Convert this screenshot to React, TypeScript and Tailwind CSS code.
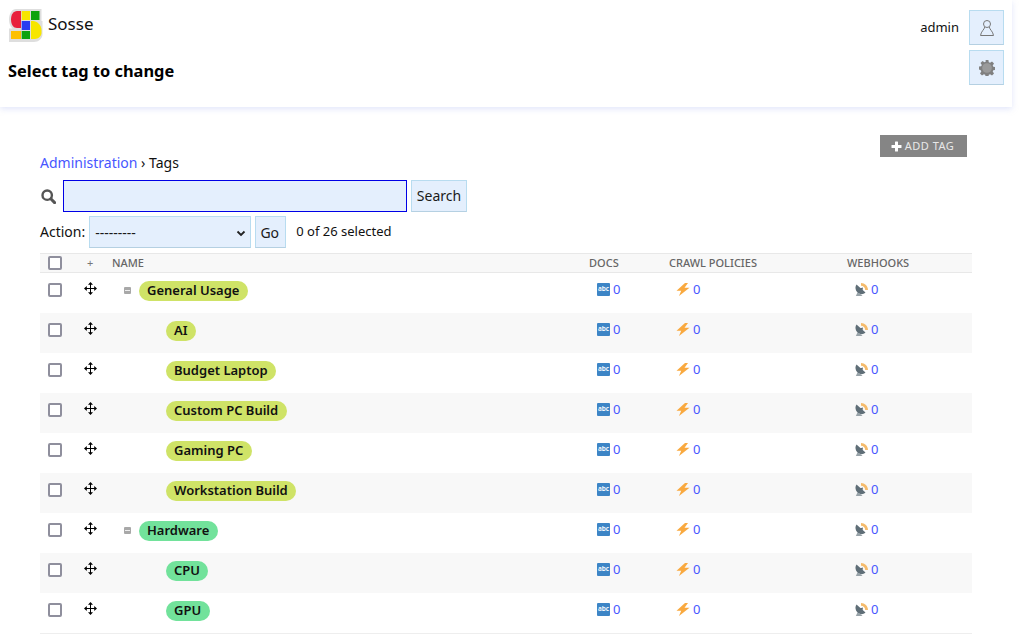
import React from "react";

const GREEN = "bg-[#cfe367]";
const MINT = "bg-[#72e29b]";

type Row = { name: string; color: string; child: boolean };
const rows: Row[] = [
  { name: "General Usage", color: GREEN, child: false },
  { name: "AI", color: GREEN, child: true },
  { name: "Budget Laptop", color: GREEN, child: true },
  { name: "Custom PC Build", color: GREEN, child: true },
  { name: "Gaming PC", color: GREEN, child: true },
  { name: "Workstation Build", color: GREEN, child: true },
  { name: "Hardware", color: MINT, child: false },
  { name: "CPU", color: MINT, child: true },
  { name: "GPU", color: MINT, child: true },
];

function Logo() {
  return (
    <svg width="35" height="35" viewBox="0 0 35 35" className="shrink-0">
      <path
        d="M8 1H33.500V13H34.500V26C34.500 30.500 30.500 34 26 34H1V20.500H4.500C2 18.500 1 15 1 11.500C1 6 4 1 8 1Z"
        fill="#dedede"
      />
      <path d="M13 3V20H9C5.500 20 3 16.500 3 11.500S5.500 3 9 3Z" fill="#e8203c" />
      <rect x="13.700" y="3" width="8.300" height="9" fill="#f7e600" />
      <rect x="23" y="3" width="8.500" height="9" fill="#0da30d" />
      <rect x="13.700" y="13" width="8.300" height="9" fill="#2a3cf0" />
      <path d="M23 13H25C29 13 33.500 17 33.500 22V25C33.500 28 30 31 27 31H23Z" fill="#f7e600" />
      <rect x="3" y="23" width="10" height="8" fill="#fdc000" />
      <rect x="13.700" y="23" width="8.300" height="8" fill="#0da30d" />
    </svg>
  );
}

function UserIcon() {
  return (
    <svg width="16" height="18" viewBox="0 0 16 18" fill="none" stroke="#777" strokeWidth="1">
      <circle cx="8" cy="5" r="3.500" />
      <path d="M5.800 8c-.5 2.500-3.800 4.500-4.300 8.500h13c-.5-4-3.800-6-4.300-8.500" />
    </svg>
  );
}

function GearIcon() {
  return (
    <svg width="16" height="16" viewBox="0 0 16 16">
      <path
        fill="#808080"
        d="M6.600 0h2.800l.4 2.200 1.300.6 1.900-1.300 2 2-1.300 1.900.6 1.300 2.200.4v2.800l-2.200.4-.6 1.300 1.300 1.900-2 2-1.900-1.300-1.300.6-.4 2.200H6.600l-.4-2.200-1.300-.6-1.900 1.300-2-2 1.300-1.900-.6-1.300L0 9.400V6.600l2.200-.4.600-1.300-1.300-1.900 2-2 1.900 1.300 1.300-.6z"
      />
      <circle cx="8" cy="8" r="4.800" fill="#9a9a9a" />
    </svg>
  );
}

function SearchIcon() {
  return (
    <svg width="15" height="15" viewBox="0 0 15 15" fill="none" stroke="#555" className="ml-px shrink-0">
      <circle cx="6.200" cy="6.200" r="4.700" strokeWidth="2.400" />
      <path d="M9.800 9.800l3.800 3.800" strokeWidth="3" strokeLinecap="round" />
    </svg>
  );
}

function MoveIcon() {
  return (
    <svg width="13" height="13" viewBox="0 0 13 13" fill="#000">
      <rect x="6" y="2" width="1" height="9" />
      <rect x="2" y="6" width="9" height="1" />
      <path d="M6.500 0L9 2.800H4zM6.500 13L4 10.200h5zM0 6.500L2.800 4v5zM13 6.500L10.200 9V4z" />
    </svg>
  );
}

function Checkbox() {
  return <span className="block h-[14px] w-[14px] rounded-[2px] border-2 border-[#8f8f9d] bg-white" />;
}

function Collapse() {
  return (
    <span className="flex h-[7px] w-[7px] items-center justify-center rounded-[1px] bg-[#a8a8a8]">
      <span className="block h-px w-[5px] bg-[#eee]" />
    </span>
  );
}

function DocsIcon() {
  return (
    <span className="flex h-[13px] w-[13px] items-center justify-center rounded-[1px] bg-[#3d85c6] text-[6.500px] leading-none font-semibold text-white">
      abc
    </span>
  );
}

function BoltIcon() {
  return (
    <svg width="14" height="13" viewBox="0 0 14 13" className="-ml-px">
      <path d="M9 0L.5 7.800h4.700L3 13 13.500 4.800H8.500L12 0z" fill="#f9a93f" />
    </svg>
  );
}

function DishIcon() {
  return (
    <svg width="13" height="13" viewBox="0 0 13 13">
      <path d="M6 0C9.800 0 13 3.200 13 7L10.200 7C10.200 4.700 8.300 2.800 6 2.800Z" fill="#f5bb6c" />
      <path d="M1.500 1.500L10.500 9.500C8 12 4.500 11.500 2.500 9.500S-.3 4 1.500 1.500Z" fill="#5f6e77" />
      <path d="M2.500 9.500L.8 13H7.500L5.500 11Z" fill="#98a3a9" />
      <path d="M4.500 5.500L8 4.500L7.500 7.500Z" fill="#5f6e77" />
    </svg>
  );
}

function Count({ icon }: { icon: React.ReactNode }) {
  return (
    <span className="flex items-center gap-[3px]">
      {icon}
      <a className="text-[13px] leading-none text-[#4756ff]">0</a>
    </span>
  );
}

function TagRow({ row, index }: { row: Row; index: number }) {
  return (
    <div className={`flex h-10 items-start ${index % 2 ? "bg-[#f8f8f8]" : "bg-white"}`}>
      <div className="w-[30px] pt-[10px] pl-2">
        <Checkbox />
      </div>
      <div className="w-[42px] pt-[9px] pl-[14px]">
        <MoveIcon />
      </div>
      <div className="flex w-[485px] pt-[8px]">
        {row.child ? (
          <span className="w-[54px] shrink-0" />
        ) : (
          <span className="flex w-[27px] shrink-0 pt-[6px] pl-[12px]">
            <Collapse />
          </span>
        )}
        <span className={`${row.color} h-5 rounded-[10px] pr-[8.400px] pl-2 text-[13px] leading-[18px] font-semibold text-[#111]`}>
          {row.name}
        </span>
      </div>
      <div className="w-[80px] pt-[10px]">
        <Count icon={<DocsIcon />} />
      </div>
      <div className="w-[178px] pt-[10px]">
        <Count icon={<BoltIcon />} />
      </div>
      <div className="pt-[10px]">
        <Count icon={<DishIcon />} />
      </div>
    </div>
  );
}

const btn = "border border-[#b8dcf0] border-b-[#b5d0e2] bg-[#e4effd] text-[14px] text-[#1a1a1a]";

export default function App() {
  return (
    <div className="h-[634px] w-[1024px] overflow-hidden bg-white font-['Noto_Sans',sans-serif] text-[#111]">
      <div className="w-[1012px]">
        <header className="flex h-[107px] justify-between bg-white pr-2 pl-2 shadow-[0_2px_6px_rgba(170,180,240,0.35)]">
          <div>
            <div className="flex h-[50px] items-start pt-[8px]">
              <Logo />
              <span className="mt-[4px] ml-[5px] text-[17px] leading-6 text-[#111]">Sosse</span>
            </div>
            <h1 className="mt-[9px] text-[16.400px] leading-[24px] font-bold text-black">Select tag to change</h1>
          </div>
          <div className="flex gap-[10px] pt-[10px]">
            <span className="mt-[7px] text-[13px] leading-5 text-[#111]">admin</span>
            <div className="flex flex-col gap-[5px]">
              <span className={`${btn} flex h-[35px] w-[35px] items-center justify-center`}>
                <UserIcon />
              </span>
              <span className={`${btn} flex h-[35px] w-[35px] items-center justify-center`}>
                <GearIcon />
              </span>
            </div>
          </div>
        </header>

        <main className="pr-10 pl-10">
          <div className="relative h-[73px]">
            <a className="absolute top-[28px] right-[5px] flex h-[22px] w-[87px] items-center justify-center gap-[3px] bg-[#858585] pr-[2px] text-[11px] tracking-[0.5px] text-[#e8e8e8]">
              <svg width="11" height="11" viewBox="0 0 11 11" fill="#fff">
                <rect x="4" y="0.500" width="3" height="10" rx="0.500" />
                <rect x="0.500" y="4" width="10" height="3" rx="0.500" />
              </svg>
              ADD TAG
            </a>
            <div className="absolute top-[46px] left-0 text-[14px] leading-5">
              <a className="text-[#4756ff]">Administration</a> › Tags
            </div>
          </div>

          <div className="flex h-8 items-center">
            <SearchIcon />
            <input className="ml-[7px] h-8 w-[344px] border border-[#0000e6] bg-[#e4effd] outline-none" readOnly />
            <button className={`${btn} ml-1 h-8 w-[56px] pb-[2px]`}>Search</button>
          </div>

          <div className="mt-[4px] flex h-8 items-center text-[14px]">
            <span className="mb-[2px]">Action:</span>
            <span className={`${btn} relative ml-1 flex h-8 w-[162px] items-center pl-[5px] text-[13.500px]`}>
              ---------
              <svg className="absolute top-[10px] right-[3px]" width="12" height="12" viewBox="0 0 12 12" fill="none" stroke="#222" strokeWidth="1.800">
                <path d="M2.500 4.500L6 8l3.500-3.500" />
              </svg>
            </span>
            <button className={`${btn} ml-1 h-8 w-[31px] pr-[2px]`}>Go</button>
            <span className="ml-[10px] text-[13px]">0 of 26 selected</span>
          </div>

          <div className="mt-[5px] flex h-5 items-center border-y border-[#e8e8e8] bg-[#f8f8f8] text-[11px] font-medium text-[#666]">
            <div className="w-[30px] pl-2">
              <Checkbox />
            </div>
            <div className="w-[42px] pl-[17px] font-normal text-[#777]">+</div>
            <div className="w-[477px]">NAME</div>
            <div className="w-[80px]">DOCS</div>
            <div className="w-[178px]">CRAWL POLICIES</div>
            <div>WEBHOOKS</div>
          </div>

          {rows.map((r, i) => (
            <TagRow key={r.name} row={r} index={i} />
          ))}
          <div className="h-px bg-[#eee]" />
        </main>
      </div>
    </div>
  );
}
